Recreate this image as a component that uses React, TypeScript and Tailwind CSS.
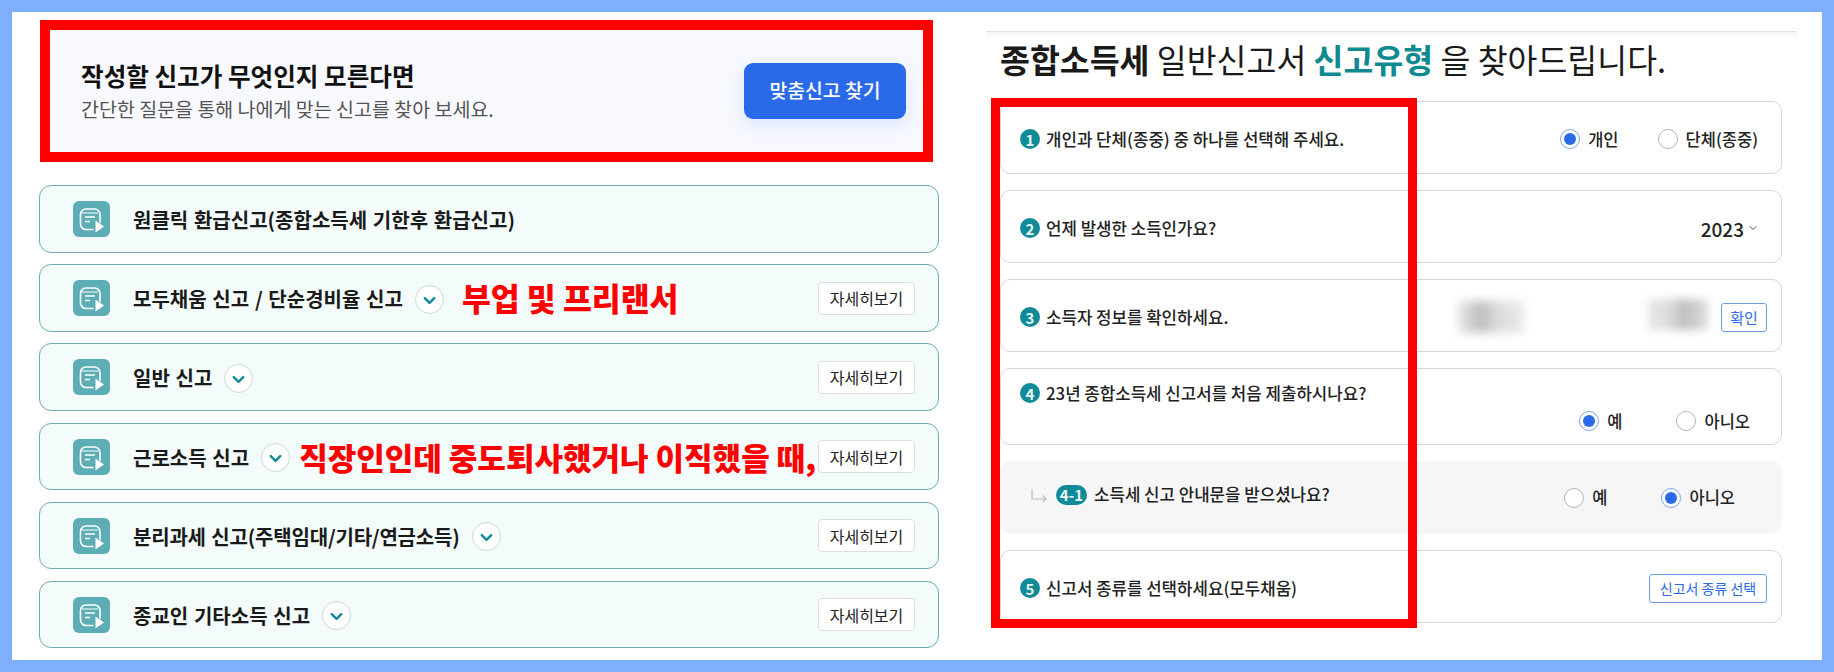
import { ChevronDown } from "lucide-react";

const FONT = "font-['Noto_Sans_CJK_KR','Liberation_Sans',sans-serif]";

function DocIcon() {
    return (
        <span className="flex h-9 w-[37px] shrink-0 items-center justify-center rounded-md bg-[#5cadb6]">
            <svg width="37" height="36" viewBox="0 0 37 36" fill="none">
                <rect x="7.5" y="8" width="19.5" height="20.5" rx="5.5" stroke="#fff" strokeWidth="1.6" />
                <path d="M9 12h16" stroke="#fff" strokeWidth="1" />
                <path d="M12 16h10M12 20.5h5" stroke="#fff" strokeWidth="1.5" />
                <path d="M20.5 17l11.5 8.5-11.5 8.5z" fill="#5cadb6" />
                <path d="M22.5 19.5l8.5 6-8.5 6z" fill="#fff" />
            </svg>
        </span>
    );
}

function CircleChevron() {
    return (
        <span className="flex h-[29px] w-[29px] shrink-0 items-center justify-center rounded-full border border-[#c9d9d9] bg-white">
            <ChevronDown size={19} strokeWidth={3} className="mt-[2px] text-[#0f8a96]" />
        </span>
    );
}

function DetailButton() {
    return (
        <button className="flex h-[33px] w-[97px] shrink-0 items-center justify-center rounded-[4px] border border-[#dedede] bg-white text-[16px] leading-none text-[#222]">
            자세히보기
        </button>
    );
}

const rows = [
    { label: "원클릭 환급신고(종합소득세 기한후 환급신고)", box: "h-[68px] mb-[11px]", plain: true },
    { label: "모두채움 신고 / 단순경비율 신고", box: "h-[68px] mb-[11px]", note: "부업 및 프리랜서", noteBox: "ml-[18px] text-[31.4px]" },
    { label: "일반 신고", box: "h-[68px] mb-[12px]" },
    { label: "근로소득 신고", box: "h-[67px] mb-[12px]", note: "직장인인데 중도퇴사했거나 이직했을 때,", noteBox: "ml-[9px] text-[31px]" },
    { label: "분리과세 신고(주택임대/기타/연금소득)", box: "h-[67px] mb-[12px]", tight: true },
    { label: "종교인 기타소득 신고", box: "h-[67px]" },
];

function Radio({ checked, label }: { checked?: boolean; label: string }) {
    return (
        <span className="flex items-center gap-2">
            {checked ? (
                <span className="flex h-5 w-5 items-center justify-center rounded-full border border-[#7aa5ee] bg-white">
                    <span className="h-3 w-3 rounded-full bg-[#2a6ae8]" />
                </span>
            ) : (
                <span className="h-5 w-5 rounded-full border border-[#b5b5b5] bg-white" />
            )}
            <span className="text-[16.5px] font-medium leading-none text-[#222]">{label}</span>
        </span>
    );
}

function Num({ n }: { n: string }) {
    return (
        <span className="flex h-5 w-5 shrink-0 items-center justify-center rounded-full bg-[#0f8a96] text-[15px] font-bold leading-none text-[#e6f6f6]">
            {n}
        </span>
    );
}

function Question({ n, text }: { n: string; text: string }) {
    return (
        <span className="flex items-center gap-[6px]">
            <Num n={n} />
            <span className="text-[16.8px] font-medium leading-none text-[#222]">{text}</span>
        </span>
    );
}

const card = "ml-[14px] w-[782px] rounded-[10px] border border-[#d6d6d6] bg-white";

export default function App() {
    return (
        <div className={`h-[672px] w-[1834px] overflow-hidden bg-[#7fb0ff] p-3 ${FONT}`}>
            <div className="flex h-[648px] bg-white">
                <div className="ml-[27px] w-[900px] shrink-0">
                    <div className="ml-px mt-2 flex h-[142px] w-[893px] items-center justify-between border-[10px] border-[#ff0000] bg-[#f8f9ff] pl-[31px] pr-[17px]">
                        <div>
                            <div className="text-[24.6px] font-bold leading-[32px] text-[#111]">작성할 신고가 무엇인지 모른다면</div>
                            <div className="mt-[4px] text-[19.5px] leading-[28px] text-[#555]">간단한 질문을 통해 나에게 맞는 신고를 찾아 보세요.</div>
                        </div>
                        <button className="h-[56px] w-[162px] rounded-[9px] bg-[#2a6ae8] text-[19.3px] font-medium leading-none text-white shadow-[0_6px_18px_rgba(42,106,232,0.15)]">
                            맞춤신고 찾기
                        </button>
                    </div>
                    <div className="mt-[23px]">
                        {rows.map((row) => (
                            <div
                                key={row.label}
                                className={`flex items-center rounded-[12px] border border-[#72a9b2] bg-[#f3fcfb] pl-[33px] pr-[23px] ${row.box}`}
                            >
                                <DocIcon />
                                <span className={`ml-[23px] mt-[2px] whitespace-nowrap text-[20px] font-bold leading-none text-[#1a1a1a] [word-spacing:1.2px] ${row.tight ? "tracking-[-0.2px]" : ""}`}>{row.label}</span>
                                {!row.plain && (
                                    <span className="ml-[12px] mt-[2px]">
                                        <CircleChevron />
                                    </span>
                                )}
                                {row.note && (
                                    <span className={`whitespace-nowrap font-black leading-none text-[#ff0000] ${row.noteBox}`}>{row.note}</span>
                                )}
                                {!row.plain && (
                                    <span className="ml-auto">
                                        <DetailButton />
                                    </span>
                                )}
                            </div>
                        ))}
                    </div>
                </div>

                <div className="relative ml-[47px] w-[811px] shrink-0">
                    <div className="mt-[19px] h-[9px] border-t border-[#e4e4e4] bg-gradient-to-b from-[#f6f6f6] to-white" />
                    <div className="ml-[14px] h-[38px] text-[32.5px] leading-[38px] text-[#1a1a1a]">
                        <b className="font-bold">종합소득세</b> 일반신고서 <b className="font-bold text-[#0f8a90]">신고유형</b> 을 찾아드립니다.
                    </div>

                    <div className={`${card} mt-[23px] flex h-[73px] items-center justify-between pl-[19px] pr-[23px] pt-[3px]`}>
                        <Question n="1" text="개인과 단체(종중) 중 하나를 선택해 주세요." />
                        <span className="flex gap-[39px]">
                            <Radio checked label="개인" />
                            <Radio label="단체(종중)" />
                        </span>
                    </div>

                    <div className={`${card} mt-[16px] flex h-[73px] items-center justify-between pl-[19px] pr-[22px] pt-[3px]`}>
                        <Question n="2" text="언제 발생한 소득인가요?" />
                        <span className="flex items-center gap-[3px] text-[19px] font-medium leading-none text-[#222]">
                            2023
                            <ChevronDown size={12} className="text-[#555]" />
                        </span>
                    </div>

                    <div className={`${card} mt-[16px] flex h-[73px] items-center pl-[19px] pr-[14px] pt-[3px]`}>
                        <Question n="3" text="소득자 정보를 확인하세요." />
                        <span className="ml-auto h-[32px] w-[66px] bg-[linear-gradient(90deg,#e8e8e8,#bdbdbd_35%,#dcdcdc_60%,#eaeaea)] blur-[5px]" />
                        <span className="ml-[124px] -mt-[5px] h-[31px] w-[60px] bg-[linear-gradient(90deg,#e8e8e8,#dcdcdc_35%,#bfbfbf_60%,#dedede)] blur-[4px]" />
                        <button className="ml-[13px] flex h-[29px] w-[46px] items-center justify-center rounded-[3px] border border-[#6f9be5] bg-white text-[15px] leading-none text-[#2a6ae8]">
                            확인
                        </button>
                    </div>

                    <div className={`${card} mt-[16px] flex h-[77px] flex-col pl-[19px] pr-[31px] pt-[14px]`}>
                        <Question n="4" text="23년 종합소득세 신고서를 처음 제출하시나요?" />
                        <span className="mt-[8px] flex gap-[54px] self-end">
                            <Radio checked label="예" />
                            <Radio label="아니오" />
                        </span>
                    </div>

                    <div className="ml-[14px] mt-[16px] flex h-[73px] w-[782px] items-center rounded-[10px] bg-[#f6f6f6] pl-[31px] pr-[47px]">
                        <span className="-mt-[6px] flex items-center">
                            <svg width="16" height="14" viewBox="0 0 16 14" fill="none" stroke="#bdbdbd" strokeWidth="1.2">
                                <path d="M1 1v10h14M11.5 7.5L15 11l-3.5 3" />
                            </svg>
                            <span className="ml-[9px] flex h-5 w-[31px] items-center justify-center rounded-full bg-[#0f8a96] text-[15px] font-bold leading-none text-[#e6f6f6]">4-1</span>
                            <span className="ml-[7px] text-[16.8px] font-medium leading-none text-[#222]">소득세 신고 안내문을 받으셨나요?</span>
                        </span>
                        <span className="ml-auto flex gap-[54px]">
                            <Radio label="예" />
                            <Radio checked label="아니오" />
                        </span>
                    </div>

                    <div className={`${card} mt-[16px] flex h-[73px] items-center justify-between pl-[19px] pr-[14px] pt-[3px]`}>
                        <Question n="5" text="신고서 종류를 선택하세요(모두채움)" />
                        <button className="flex h-[29px] w-[118px] items-center justify-center rounded-[3px] border border-[#6f9be5] bg-white text-[14px] leading-none text-[#2a6ae8]">
                            신고서 종류 선택
                        </button>
                    </div>

                    <div className="absolute left-[5px] top-[86px] h-[530px] w-[426px] border-[9px] border-[#ff0000]" />
                </div>
            </div>
        </div>
    );
}
